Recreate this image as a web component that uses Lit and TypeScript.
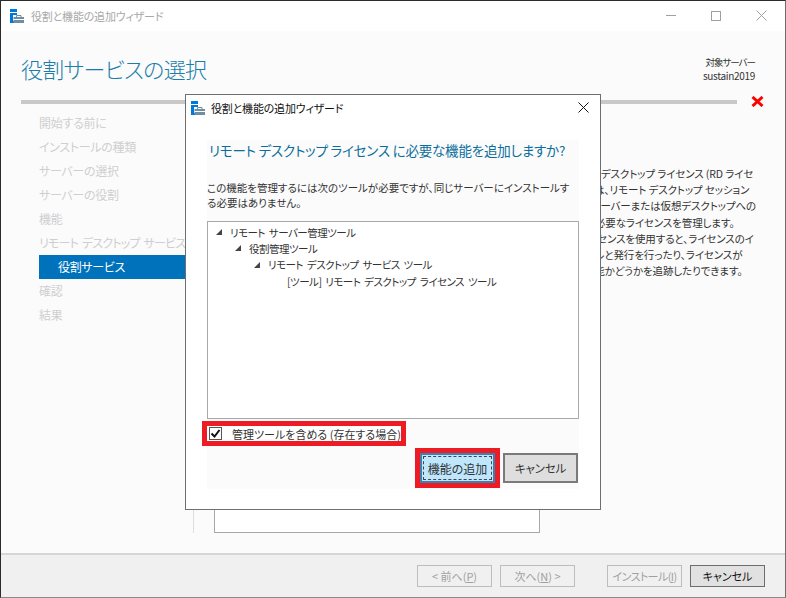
import { LitElement, html, css, svg } from "lit";
import { customElement } from "lit/decorators.js";

const appIcon = svg`<svg class="ico" width="14" height="14" viewBox="0 0 14 14">
  <rect x="0" y="0" width="7" height="3" fill="#0078d7"/>
  <rect x="0" y="4" width="3" height="10" fill="#0078d7"/>
  <rect x="3" y="4" width="4" height="2" fill="#0078d7"/>
  <rect x="3" y="12" width="2" height="2" fill="#0078d7"/>
  <path d="M3.500 8H14v6H3.500z" fill="#6f8ea3"/>
  <path d="M6.500 8V6.500h4.500V8" fill="none" stroke="#6f8ea3"/>
  <path d="M3.500 10.500H14" stroke="#fff" stroke-width="1"/>
</svg>`;

const closeIcon = (c: string) => svg`<svg width="11" height="11" viewBox="0 0 11 11"><path d="M.5.5l10 10M10.500.5l-10 10" stroke="${c}" fill="none"/></svg>`;

const STEPS = ["開始する前に", "インストールの種類", "サーバーの選択", "サーバーの役割", "機能"];
const STEPS2 = ["確認", "結果"];
const DESC = [
  { text: "リモート デスクトップ ライセンス (RD ライセ", indent: 0 },
  { text: "ンス) は、リモート デスクトップ セッション", indent: 8 },
  { text: "ホスト サーバーまたは仮想デスクトップへの", indent: -1 },
  { text: "接続に必要なライセンスを管理します。", indent: 2 },
  { text: "RD ライセンスを使用すると、ライセンスのイ", indent: 1 },
  { text: "ンストールと発行を行ったり、ライセンスが", indent: -4 },
  { text: "利用可能かどうかを追跡したりできます。", indent: 1 },
];
const TREE = [
  { depth: 0, arrow: true, text: "リモート サーバー管理ツール" },
  { depth: 1, arrow: true, text: "役割管理ツール" },
  { depth: 2, arrow: true, text: "リモート デスクトップ サービス ツール" },
  { depth: 3, arrow: false, text: "[ツール] リモート デスクトップ ライセンス ツール" },
];

@customElement("app-root")
export class AppRoot extends LitElement {
  static styles = css`
    :host { display: block; width: 786px; height: 598px; position: relative; overflow: hidden;
      font-family: "Noto Sans CJK JP", "Noto Sans", sans-serif; font-feature-settings: "palt"; }
    * { box-sizing: border-box; }
    .ico { display: block; flex: none; }
    .window { width: 786px; height: 598px; display: flex; flex-direction: column; background: #fbfbfb;
      border: 1px solid #5a5a5a; border-top-color: #2b2b2b; border-left-color: #2b2b2b; border-right-color: #6d6d6d; border-bottom-color: #8a8a8a; }
    .titlebar { height: 30px; flex: none; background: #fff; display: flex; align-items: center; padding: 0 0 1px 9px; gap: 7px;
      font-size: 11px; letter-spacing: -.2px; color: #a8a8a8; }
    .winbtns { margin-left: auto; display: flex; align-items: center; gap: 35px; padding-right: 18px; }
    .min { width: 10px; height: 1px; background: #a0a0a0; }
    .max { width: 10px; height: 10px; border: 1px solid #a0a0a0; }
    .header { height: 64px; flex: none; display: flex; justify-content: space-between; padding: 21px 30px 0 20px; }
    .h1 { font-size: 22px; letter-spacing: -.7px; font-weight: 300; color: #1a7ea8; line-height: 32px; }
    .target { font-size: 10px; line-height: 14px; color: #333; text-align: right; padding-top: 3px; }
    .target .ja { font-size: 9.500px; letter-spacing: -1px; }
    .target .en { letter-spacing: -.3px; }
    .progress { height: 13px; flex: none; display: flex; align-items: center; padding-left: 20px; padding-right: 21px; gap: 14px; }
    .bar { flex: 1; height: 4px; background: #c8c8c8; }
    .main { flex: 1; min-height: 0; display: flex; }
    .side { width: 192px; flex: none; padding: 3px 0 0 38px; display: flex; flex-direction: column; }
    .step { height: 24px; line-height: 24px; font-size: 12px; letter-spacing: -.3px; color: #cfcfcf; white-space: nowrap; }
    .step.tight { letter-spacing: -.8px; word-spacing: 2px; }
    .step.sel { background: #0072bc; color: #fff; padding-left: 19px; width: 147px; }
    .content { flex: 1; display: flex; gap: 22px; border-left: 1px solid #dedede; padding-left: 20px; margin-bottom: 20px; }
    .rolebox { width: 326px; background: #fff; border: 1px solid #a8a8a8; }
    .desc { padding-top: 58px; font-size: 10.500px; letter-spacing: -.1px; line-height: 16.200px; color: #333; white-space: nowrap; }
    .footer { height: 44px; flex: none; background: #f0f0f0; border-top: 2px solid #d6d6d6; display: flex; align-items: center;
      padding: 0 20px 0 416px; }
    .fbtn { width: 75px; height: 22px; font-size: 11px; line-height: 20px; text-align: center; border: 1px solid #bdbdbd; color: #a0a0a0; background: #f0f0f0; white-space: nowrap; }
    .fbtn.next { margin-left: 8px; }
    .fbtn.inst { margin-left: 32px; letter-spacing: -.6px; }
    .fbtn.cancel { margin-left: 8px; background: #e1e1e1; border-color: #6d6d6d; color: #111; }

    .dialog { position: absolute; left: 185px; top: 94px; width: 416px; height: 416px; background: #fff;
      border: 1px solid #6f6f6f; display: flex; flex-direction: column; }
    .dtitle { height: 25px; flex: none; display: flex; align-items: center; padding: 0 11px 0 5px; gap: 6px; font-size: 11px; letter-spacing: -.2px; color: #111; }
    .dtitle svg:last-child { margin-left: auto; }
    .panel { margin: 20px 21px 20px 21px; flex: 1; background: #fbfbfb; display: flex; flex-direction: column; }
    .q { font-size: 13.500px; letter-spacing: -.2px; line-height: 20px; color: #0a6e9c; padding: 0 0 0 2px; white-space: nowrap; }
    .qdesc { margin-top: 20px; font-size: 10.500px; line-height: 15px; color: #333; white-space: nowrap; }
    .tree { margin-top: 11px; height: 198px; background: #fff; border: 1px solid #a8a8a8; padding-top: 2px; }
    .row { height: 16.300px; display: flex; align-items: center; font-size: 10.500px; letter-spacing: -.5px; word-spacing: 2px; color: #333; white-space: nowrap; }
    .row .tri { width: 0; height: 0; border-left: 6px solid transparent; border-bottom: 6px solid #444; margin-right: 8px; flex: none; }
    .row .sp { width: 14px; flex: none; }
    .check { margin-top: 7px; height: 15px; width: 194px; background: #fff; outline: 5px solid #ed1c24; display: flex; align-items: center;
      font-size: 11px; color: #333; white-space: nowrap; padding-left: 2px; gap: 10px; }
    .box { width: 13px; height: 13px; flex: none; display: block; }
    .btns { margin-top: 12px; display: flex; justify-content: flex-end; gap: 8px; padding-right: 1px; }
    .dbtn { width: 75px; height: 30px; font-size: 12px; display: flex; align-items: center; justify-content: center; color: #333; }
    .dbtn.add { background: #bee6fd; border: 2px solid #3c7fb1; outline: 5px solid #ed1c24; position: relative; }
    .dbtn.add span { position: absolute; inset: 1px; border: 1px dashed #444; display: flex; align-items: center; justify-content: center; }
    .dbtn.can { background: #dedede; border: 2px solid #7a7a7a; font-size: 11.500px; letter-spacing: -.2px; }
  `;

  render() {
    return html`
      <div class="window">
        <div class="titlebar">${appIcon}<span>役割と機能の追加ウィザード</span>
          <div class="winbtns"><div class="min"></div><div class="max"></div>${closeIcon("#a0a0a0")}</div>
        </div>
        <div class="header">
          <div class="h1">役割サービスの選択</div>
          <div class="target"><div class="ja">対象サーバー</div><div class="en">sustain2019</div></div>
        </div>
        <div class="progress"><div class="bar"></div>
          <svg width="13" height="11" viewBox="0 0 13 11"><path d="M1.500 1l10 9M11.500 1l-10 9" stroke="#f00" stroke-width="3" fill="none"/></svg>
        </div>
        <div class="main">
          <div class="side">
            ${STEPS.map((s) => html`<div class="step">${s}</div>`)}
            <div class="step tight">リモート デスクトップ サービス</div>
            <div class="step sel">役割サービス</div>
            ${STEPS2.map((s) => html`<div class="step">${s}</div>`)}
          </div>
          <div class="content">
            <div class="rolebox"></div>
            <div class="desc">${DESC.map((d) => html`<div style="margin-left:${d.indent}px">${d.text}</div>`)}</div>
          </div>
        </div>
        <div class="footer">
          <div class="fbtn">&lt; 前へ(<u>P</u>)</div>
          <div class="fbtn next">次へ(<u>N</u>) &gt;</div>
          <div class="fbtn inst">インストール(<u>I</u>)</div>
          <div class="fbtn cancel">キャンセル</div>
        </div>
      </div>
      <div class="dialog">
        <div class="dtitle">${appIcon}<span>役割と機能の追加ウィザード</span>${closeIcon("#111")}</div>
        <div class="panel">
          <div class="q">リモート デスクトップ ライセンス に必要な機能を追加しますか?</div>
          <div class="qdesc">この機能を管理するには次のツールが必要ですが、同じサーバーにインストールす<br />る必要はありません。</div>
          <div class="tree">
            ${TREE.map((r) => html`<div class="row" style="padding-left:${8 + r.depth * 19}px">
              ${r.arrow ? html`<span class="tri"></span>` : html`<span class="sp"></span>`}<span>${r.text}</span></div>`)}
          </div>
          <div class="check">
            <svg class="box" viewBox="0 0 13 13"><rect x=".5" y=".5" width="12" height="12" fill="#fff" stroke="#555"/><path d="M2.500 6.500l3 3 5-6.500" fill="none" stroke="#111" stroke-width="2"/></svg>
            <span>管理ツールを含める (存在する場合)</span>
          </div>
          <div class="btns">
            <div class="dbtn add"><span>機能の追加</span></div>
            <div class="dbtn can">キャンセル</div>
          </div>
        </div>
      </div>
    `;
  }
}
